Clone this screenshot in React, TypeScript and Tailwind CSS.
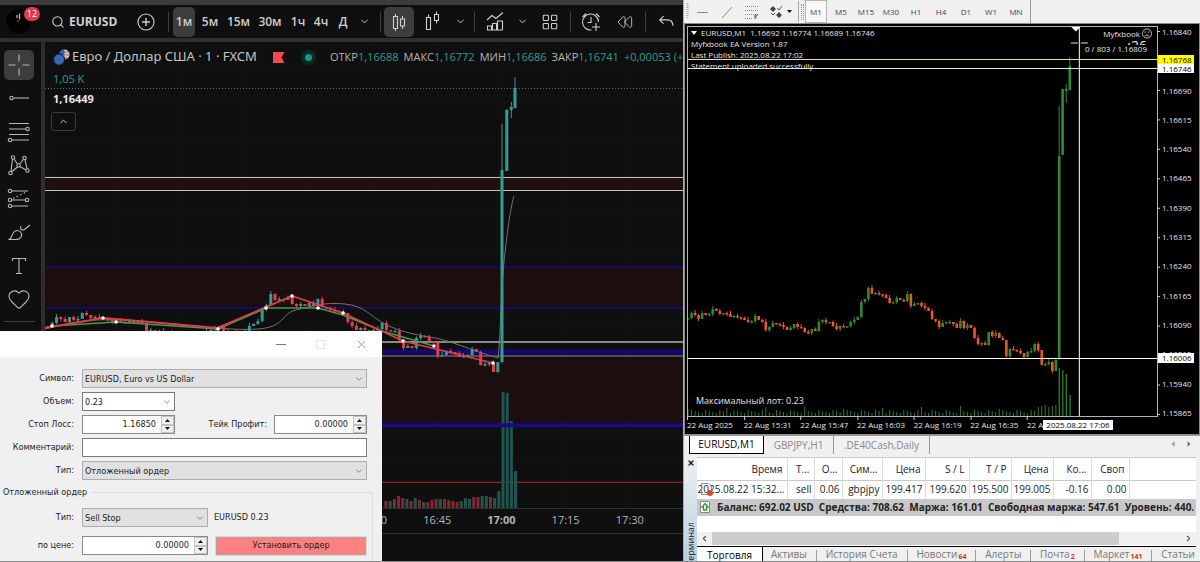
import { Fragment, useState, type ReactNode } from "react";
import { ChevronDown, ChevronUp, Heart, LayoutGrid, Rewind, Search, X } from "lucide-react";

type Candle = { x: number; open: number; close: number; high: number; low: number };

function buildCandles(closes: number[], x0: number, step: number, first: number): Candle[] {
  return closes.map((close, i) => {
    const open = i === 0 ? first : closes[i - 1];
    const high = Math.min(open, close) - (((i * 7) % 5) * 3) / 4;
    const low = Math.max(open, close) + (((i * 5) % 4) * 3) / 4;
    return { x: x0 + i * step, open, close, high, low };
  });
}

const tvCloses = [
  326, 323, 317, 319, 322, 317, 320, 319, 313, 315, 318, 317, 318, 319, 320, 322, 321, 322, 322, 321, 323, 322, 323,
  331, 330, 332, 331, 333, 332, 334, 333, 335, 334, 336, 335, 334, 333, 332, 330, 328, 326, 331, 333, 332, 333, 332,
  331, 326, 324, 321, 309, 305, 294, 300, 299, 300, 297, 304, 306, 304, 306, 303, 306, 299, 307, 308, 310, 311, 312,
  313, 322, 326, 330, 328, 330, 331, 330, 329, 323, 330, 331, 331, 340, 348, 346, 348, 338, 336, 337, 341, 343, 356,
  355, 351, 352, 353, 357, 356, 355, 349, 352, 365, 364, 363, 372, 362,
];
const tvCandles: Candle[] = [
  ...buildCandles(tvCloses, 48, 4.284, 328),
  { x: 502, open: 362, close: 170, high: 124, low: 363 },
  { x: 506.8, open: 171, close: 110, high: 109, low: 171 },
  { x: 511.3, open: 110, close: 107, high: 102, low: 118 },
  { x: 515, open: 108, close: 88, high: 77, low: 108 },
];
const tvVolume = [
  501, 501, 499, 496, 498, 499, 501, 498, 500, 502, 502, 500, 499, 499, 499, 500, 501, 502, 501, 498, 499, 497, 497, 496,
  496, 497, 498, 491, 392, 393, 421, 471,
];
const tvVolumeDown = [0, 2, 3, 4, 6, 8, 10, 11, 12, 14, 15, 16, 17, 21, 22, 25];

const mtCloses = [
  318, 313, 315, 319, 313, 315, 314, 309, 311, 314, 313, 314, 317, 316, 317, 318, 320, 322, 321, 316, 320, 322, 330, 327,
  323, 324, 325, 327, 330, 328, 324, 327, 328, 332, 333, 329, 331, 322, 320, 322, 322, 326, 329, 326, 327, 326, 322, 320,
  317, 302, 299, 288, 294, 293, 294, 295, 298, 303, 302, 298, 300, 301, 294, 306, 304, 303, 306, 308, 311, 319, 321, 327,
  323, 322, 322, 324, 328, 321, 328, 325, 328, 338, 344, 343, 345, 332, 336, 333, 338, 340, 356, 349, 350, 351, 353, 357,
  352, 351, 344, 350, 365, 364, 362, 371, 360,
];
const mtCandles: Candle[] = [
  ...buildCandles(mtCloses, 689, 3.53, 319),
  { x: 1059.4, open: 359, close: 156, high: 106, low: 360 },
  { x: 1062.8, open: 155, close: 89, high: 89, low: 155 },
  { x: 1066.4, open: 91, close: 89, high: 84, low: 103 },
  { x: 1070, open: 90, close: 66, high: 57, low: 90 },
];

const swings = [
  [52, 326], [103, 318], [116, 322], [218, 329], [266, 308], [292, 296],
  [318, 308], [343, 313], [403, 341], [434, 346], [493, 363],
];

function Candles({ data, up, down, width }: { data: Candle[]; up: string; down: string; width: number }) {
  return (
    <g>
      {data.map((c) => {
        const color = c.close <= c.open ? up : down;
        return (
          <Fragment key={c.x}>
            <line x1={c.x} x2={c.x} y1={c.high} y2={c.low} stroke={color} />
            <rect
              x={c.x - width / 2}
              y={Math.min(c.open, c.close)}
              width={width}
              height={Math.max(1.5, Math.abs(c.open - c.close))}
              fill={color}
            />
          </Fragment>
        );
      })}
    </g>
  );
}

function Icon({ children, size = 24 }: { children: ReactNode; size?: number }) {
  return (
    <svg
      className="shrink-0"
      width={size}
      height={size}
      viewBox="0 0 24 24"
      fill="none"
      stroke="currentColor"
      strokeWidth="1.1"
      aria-hidden
    >
      {children}
    </svg>
  );
}

const PlusCircle = () => (
  <Icon>
    <circle cx="12" cy="12" r="8" />
    <path d="M12 8v8M8 12h8" strokeWidth="1.4" />
  </Icon>
);
const CandleIcon = () => (
  <Icon>
    <path d="M6.500 6.500h4v12h-4zM8.500 4v2.500M8.500 18.500V21M13.500 9h4v7h-4zM15.500 6v3M15.500 16v3" />
  </Icon>
);
const BarStyleIcon = () => (
  <Icon>
    <path d="M5.500 7.500h4v12h-4zM7.500 4.500v3M13.500 4.500h4v6h-4zM15.500 1.500v3M15.500 10.500v3" />
  </Icon>
);
const IndicatorIcon = () => (
  <Icon>
    <path d="M4 10l5-4.500 4 3 7-6M4 20h15.500M4.500 20v-4h4v4M9.500 20v-6.500h4V20M14.500 20v-9h5v9" />
  </Icon>
);
const AlarmIcon = () => (
  <Icon>
    <path d="M19.500 12a8 8 0 1 0-7 8M12 7v5.500H8.500M3.500 7L7 3.500M17 3.500L20.500 7M17 13v8M13 17h8" />
  </Icon>
);
const UndoIcon = () => (
  <Icon size={20}>
    <path d="M9 5L4.500 9.500L9 14M5 9.500h9c4 0 6 3 6.500 7" strokeWidth="1.4" />
  </Icon>
);
const CrossIcon = () => (
  <Icon>
    <path d="M12 1.500v7M12 15.500v7M1.500 12h7M15.500 12h7" />
  </Icon>
);
const LineIcon = () => (
  <Icon>
    <circle cx="4.500" cy="12" r="1.700" />
    <path d="M6.500 12H22" />
  </Icon>
);
const FibIcon = () => (
  <Icon>
    <path d="M2 3.500h20M2 9h17M2 14.500h20M5 20h17" />
    <circle cx="20.500" cy="9" r="1.700" />
    <circle cx="3" cy="20" r="1.700" />
  </Icon>
);
const PatternIcon = () => (
  <Icon>
    <path d="M4 18.500L5.500 6M7 6l3.500 5M12.500 11L16.500 6.500M18 6.500l2 9.500M5 18.500l5.500-4.500M13 13.500l6 3.500" />
    <circle cx="6" cy="4.500" r="1.700" />
    <circle cx="17.500" cy="5" r="1.700" />
    <circle cx="11.500" cy="12.500" r="1.700" />
    <circle cx="3.500" cy="20" r="1.700" />
    <circle cx="20.500" cy="17.500" r="1.700" />
  </Icon>
);
const ForecastIcon = () => (
  <Icon>
    <path d="M5 4h16M5 13h13M5 19h16" />
    <path d="M6 11.500L19 5" strokeDasharray="1.500 2.500" />
    <circle cx="3" cy="4" r="1.700" />
    <circle cx="3" cy="13" r="1.700" />
    <circle cx="20" cy="13" r="1.700" />
    <circle cx="3" cy="19" r="1.700" />
  </Icon>
);
const BrushIcon = () => (
  <Icon>
    <path d="M1.500 19.500c3 0 3-4 5-7s6-2.500 7.500 0 .5 7-5.500 7zM14 6c-1.500 2.500 1 5 3.500 3.500L23 5" />
  </Icon>
);
const TextIcon = () => (
  <Icon>
    <path d="M5.500 7V4.500h13V7M12 4.500v15M9 19.500h6" />
  </Icon>
);

const toolbar: { label: string; width: string; node?: ReactNode; active?: boolean }[] = [
  { label: "1м", width: "w-[22px]", active: true },
  { label: "5м", width: "w-[30px]" },
  { label: "15м", width: "w-[27px]" },
  { label: "30м", width: "w-[36px]" },
  { label: "1ч", width: "w-[20px]" },
  { label: "4ч", width: "w-[26px]" },
  { label: "Д", width: "w-[18px]" },
  { label: "Интервалы", width: "w-[24px]", node: <ChevronDown size={11} /> },
  { label: "|", width: "w-[8px]" },
  { label: "Свечи", width: "w-[30px]", node: <CandleIcon />, active: true },
  { label: "Вид графика", width: "w-[38px]", node: <BarStyleIcon /> },
  { label: "Ещё виды", width: "w-[16px]", node: <ChevronDown size={11} /> },
  { label: "|", width: "w-[12px]" },
  { label: "Индикаторы", width: "w-[30px]", node: <IndicatorIcon /> },
  { label: "Шаблоны", width: "w-[24px]", node: <ChevronDown size={11} /> },
  { label: "Макет", width: "w-[32px]", node: <LayoutGrid size={18} strokeWidth={1.4} /> },
  { label: "|", width: "w-[8px]" },
  { label: "Оповещение", width: "w-[34px]", node: <AlarmIcon /> },
  { label: "Симулятор", width: "w-[34px]", node: <Rewind size={16} strokeWidth={1.3} /> },
  { label: "|", width: "w-[6px]" },
  { label: "Отменить", width: "w-[36px]", node: <UndoIcon /> },
];

const drawTools: [string, ReactNode][] = [
  ["Курсор", <CrossIcon />],
  ["Линия", <LineIcon />],
  ["Фибоначчи", <FibIcon />],
  ["Паттерны", <PatternIcon />],
  ["Прогноз", <ForecastIcon />],
  ["Кисть", <BrushIcon />],
  ["Текст", <TextIcon />],
  ["Избранное", <Heart size={24} strokeWidth={1.1} />],
];

function TvToolbar() {
  return (
    <div className="flex h-[33px] items-center overflow-hidden text-[#d0d0d0]">
      <div className="relative h-full w-[46px] shrink-0">
        <svg width="40" height="33" viewBox="0 0 40 33" aria-hidden>
          <circle cx="19" cy="16" r="12.500" fill="#020202" />
          <path d="M17 10v3M19.500 8.500v6" stroke="#b8b0ac" strokeWidth="1.300" />
          <circle cx="18" cy="16" r="1.500" fill="#3a2c28" />
        </svg>
        <span className="absolute top-[2px] left-[24px] grid h-[14px] w-[16px] place-items-center rounded-full bg-[#e03a50] text-[9px] text-white">
          12
        </span>
      </div>
      <button className="flex w-[82px] shrink-0 items-center gap-1 pl-[5px] text-[12px] font-bold">
        <Search size={14} strokeWidth={1.8} />
        EURUSD
      </button>
      <button className="grid w-[36px] shrink-0 place-items-center" aria-label="Добавить">
        <PlusCircle />
      </button>
      <span className="mx-1 h-5 w-px shrink-0 bg-[#3d3d3d]" />
      {toolbar.map((t, i) =>
        t.label === "|" ? (
          <span key={i} className={`${t.width} flex shrink-0 justify-center`}>
            <span className="h-5 w-px bg-[#3d3d3d]" />
          </span>
        ) : (
          <button
            key={i}
            aria-label={t.label}
            className={`${t.width} ${t.active ? "rounded-[5px] bg-[#3d3d3d]" : ""} flex h-[30px] shrink-0 items-center justify-center text-[12px] font-semibold`}
          >
            {t.node ?? t.label}
          </button>
        ),
      )}
    </div>
  );
}

function TvPlot() {
  const grid = [51, 116, 180, 244, 309, 373, 437, 502, 566, 630];
  const rows = [64, 101, 139, 176, 213, 251, 288, 325, 363, 400, 437, 460];
  return (
    <svg className="absolute inset-0 h-full w-full" viewBox="45 42 638 519" preserveAspectRatio="none" aria-hidden>
      <rect x="45" y="178" width="638" height="13" fill="#1e1011" />
      <rect x="45" y="267" width="638" height="41" fill="#1c0d0f" />
      <rect x="45" y="356" width="638" height="69" fill="#1c0d0f" />
      {grid.map((x) => (
        <line key={x} x1={x + 0.5} x2={x + 0.5} y1="42" y2="508" stroke="#fff" strokeOpacity=".02" />
      ))}
      {rows.map((y) => (
        <line key={y} x1="45" x2="683" y1={y + 0.5} y2={y + 0.5} stroke="#fff" strokeOpacity=".02" />
      ))}
      <path d="M45 88.500h638" stroke="#3f7a70" strokeDasharray="1 2" />
      <path d="M45 177.500h638M45 190.500h638" stroke="#c9c1bd" strokeWidth="1.200" />
      <path d="M45 267.200h638M45 307.700h638" stroke="#17088a" strokeWidth="1.600" />
      <path d="M45 342h638" stroke="#b4b0ac" strokeWidth="1.400" />
      <rect x="45" y="349.500" width="638" height="5" fill="#170870" />
      <path d="M45 356h638" stroke="#5b6379" strokeWidth="1.500" />
      <path d="M45 482.300h638" stroke="#8f2027" strokeWidth="1.300" />
      <path d="M45 508.500h638M45 533.500h638" stroke="#303030" />
      {tvVolume.map((y, i) => (
        <rect
          key={i}
          x={384.5 + i * 4.18}
          y={y}
          width="3"
          height={508 - y}
          fill={tvVolumeDown.includes(i) ? "#7d2b31" : "#1f5750"}
        />
      ))}
      <rect x="45" y="423.300" width="638" height="4" fill="#190a85" />
      <path
        d="M45 329C90 317 110 319 150 322S230 331 258 329S280 314 296 310S325 302 345 304S370 316 383 323S410 334 430 337S470 350 498 358C501 330 501 290 504 262S510 210 514 196"
        fill="none"
        stroke="#77706e"
      />
      <Candles data={tvCandles} up="#369b90" down="#e0404d" width={3} />
      <path
        d="M52 326L116 322L218 329L266 308L318 308L343 315L382 331L434 346"
        fill="none"
        stroke="#3f9c50"
        strokeWidth="1.700"
      />
      <path
        d="M45 328L103 318L150 322L217 328L292 296L343 313L403 341L493 363"
        fill="none"
        stroke="#e63a48"
        strokeWidth="1.800"
      />
      {swings.map(([x, y]) => (
        <circle key={x} cx={x} cy={y} r="1.800" fill="#fff" />
      ))}
    </svg>
  );
}

const quote = [
  ["ОТКР", "1,16688"],
  ["МАКС", "1,16772"],
  ["МИН", "1,16686"],
  ["ЗАКР", "1,16741"],
];

function TvChart() {
  return (
    <div className="relative flex min-w-0 flex-1 flex-col overflow-hidden bg-[#0f0f0f]">
      <TvPlot />
      <div className="relative flex-1">
        <div className="flex h-[30px] items-center pl-2 whitespace-nowrap">
          <svg className="shrink-0" width="17" height="17" viewBox="0 0 17 17" aria-hidden>
            <circle cx="11.500" cy="5.500" r="5" fill="#d8d4dc" />
            <path d="M11 3h5.500M11 6h5.500M10 9h5" stroke="#d04858" />
            <path d="M6.500 6V3A5 5 0 0 1 11.500.5V6z" fill="#3c62ae" />
            <circle cx="6" cy="10.500" r="5.800" fill="#2a62b0" stroke="#0f0f0f" />
            <circle cx="6" cy="10.500" r="2.500" fill="none" stroke="#6a90b8" strokeDasharray="1 1" />
          </svg>
          <h1 className="ml-[2px] w-[201px] shrink-0 font-['Noto_Sans','Open_Sans',sans-serif] text-[13px] text-[#c4c4c4]">
            Евро / Доллар США · 1 · FXCM
          </h1>
          <svg className="shrink-0" width="12" height="11" viewBox="0 0 12 11" aria-hidden>
            <path d="M0 0h11.500L8.500 5.500l3 5.500H0z" fill="#f5484f" />
          </svg>
          <span className="ml-4 grid h-[15px] w-[15px] shrink-0 place-items-center rounded-full bg-[#0c2a25]">
            <span className="h-[7px] w-[7px] rounded-full bg-[#0d9c81]" />
          </span>
          <div className="ml-[14px] flex gap-[5px] text-[11px] text-[#b4b4b4]">
            {quote.map(([name, value]) => (
              <span key={name}>
                {name}
                <span className="text-[#369b8c]">{value}</span>
              </span>
            ))}
            <span className="text-[#369b8c]">+0,00053 (+</span>
          </div>
        </div>
        <p className="pl-2 text-[11px] leading-[13px] text-[#369b8c]">1,05 K</p>
        <p className="mt-[7px] pl-2 text-[11px] leading-[13px] font-bold text-[#e8e8e8]">1,16449</p>
        <button
          aria-label="Свернуть"
          className="mt-[7px] ml-1.5 grid h-[19px] w-[25px] place-items-center rounded-[3px] border border-[#3a3a3a] text-[#d0d0d0]"
        >
          <ChevronUp size={11} />
        </button>
      </div>
      <div className="relative mb-7 flex h-[25px] items-center pr-[21px] pl-[39px] text-[11px] text-[#b4b4b4]">
        {["15:30", "15:45", "16:00", "16:15", "16:30", "16:45", "17:00", "17:15", "17:30"].map((t) => (
          <span key={t} className={`flex-1 text-center ${t === "17:00" ? "font-bold" : ""}`}>
            {t}
          </span>
        ))}
      </div>
    </div>
  );
}

function Select({ id, options, editable }: { id: string; options: string[]; editable?: boolean }) {
  return (
    <div className="relative min-w-0 flex-1">
      <select
        id={id}
        className={`${editable ? "border-[#7a7a7a] bg-white" : "border-[#adadad] bg-[#e1e1e1]"} block h-[19px] w-full appearance-none border pl-[2px] leading-[16px]`}
      >
        {options.map((o) => (
          <option key={o}>{o}</option>
        ))}
      </select>
      <ChevronDown size={10} strokeWidth={1.8} className="pointer-events-none absolute top-[5px] right-[3px] text-[#666]" />
    </div>
  );
}

function Spin({ id, initial }: { id: string; initial: string }) {
  const [value, setValue] = useState(initial);
  const bump = (d: number) => setValue((v) => (Number(v) + d).toFixed(5));
  return (
    <div className="flex h-[19px] min-w-0 flex-1 border border-[#8a8a8a] bg-white">
      <input
        id={id}
        value={value}
        onChange={(e) => setValue(e.target.value)}
        className="w-full min-w-0 flex-1 bg-transparent pr-[5px] text-right outline-none"
      />
      <div className="flex w-[13px] flex-col bg-[#f0f0f0]">
        {[1, -1].map((d) => (
          <button
            key={d}
            type="button"
            aria-label={d > 0 ? "Больше" : "Меньше"}
            onClick={() => bump(d * 0.00001)}
            className="grid flex-1 place-items-center border border-[#c4c4c4]"
          >
            <svg width="5" height="3" viewBox="0 0 5 3" aria-hidden>
              <path d={d > 0 ? "M0 3L2.500 0L5 3z" : "M0 0L2.500 3L5 0z"} fill="#111" />
            </svg>
          </button>
        ))}
      </div>
    </div>
  );
}

function Field({ id, label, children }: { id: string; label: string; children: ReactNode }) {
  return (
    <div className="flex items-center">
      <label htmlFor={id} className="w-[75px] shrink-0 pr-px text-right">
        {label}
      </label>
      <div className="ml-[7px] flex min-w-0 flex-1 items-center">{children}</div>
    </div>
  );
}

function OrderDialog() {
  return (
    <form
      onSubmit={(e) => e.preventDefault()}
      className="absolute bottom-0 left-0 w-[382px] bg-[#f0f0f0] font-['DejaVu_Sans_Condensed','DejaVu_Sans',sans-serif] text-[9px] text-[#1c1c1c]"
    >
      <div className="flex h-[26px] items-center justify-end gap-[26px] bg-white pr-[14px] text-[#777]">
        <button type="button" aria-label="Свернуть" className="h-px w-[10px] bg-[#777]" />
        <button type="button" aria-label="Развернуть" className="mx-1 h-[9px] w-[9px] border border-[#e6e6e6]" />
        <button type="button" aria-label="Закрыть">
          <X size={13} strokeWidth={1.3} />
        </button>
      </div>
      <div className="flex flex-col gap-1 pt-3 pr-[15px]">
        <Field id="symbol" label="Символ:">
          <Select id="symbol" options={["EURUSD, Euro vs US Dollar"]} />
        </Field>
        <Field id="volume" label="Объем:">
          <div className="flex w-[93px]">
            <Select id="volume" options={["0.23"]} editable />
          </div>
        </Field>
        <Field id="sl" label="Стоп Лосс:">
          <div className="flex w-[93px]">
            <Spin id="sl" initial="1.16850" />
          </div>
          <label htmlFor="tp" className="flex-1 pr-[7px] text-right">
            Тейк Профит:
          </label>
          <div className="flex w-[93px]">
            <Spin id="tp" initial="0.00000" />
          </div>
        </Field>
        <Field id="comment" label="Комментарий:">
          <input id="comment" className="h-[19px] w-full border border-[#7a7a7a] bg-white px-1 outline-none" />
        </Field>
        <Field id="type" label="Тип:">
          <Select id="type" options={["Отложенный ордер"]} />
        </Field>
      </div>
      <fieldset className="mt-1 mr-[9px] border-t border-r border-[#dcdcdc] pb-1.5">
        <legend className="pr-1 pl-[3px] leading-[16px]">Отложенный ордер</legend>
        <div className="flex flex-col gap-[9px] pt-2 pr-[6px]">
          <Field id="pending" label="Тип:">
            <div className="flex w-[126px]">
              <Select id="pending" options={["Sell Stop"]} />
            </div>
            <span className="ml-[6px]">EURUSD 0.23</span>
          </Field>
          <Field id="price" label="по цене:">
            <div className="flex w-[126px]">
              <Spin id="price" initial="0.00000" />
            </div>
            <button
              type="submit"
              className="ml-2 h-[18px] flex-1 border border-[#b9a0a0] bg-[#ff8080] outline outline-[#d8d8d8]"
            >
              Установить ордер
            </button>
          </Field>
        </div>
      </fieldset>
    </form>
  );
}

const scale = [
  "1.16840", "", "1.16690", "1.16615", "1.16540", "1.16465", "1.16390",
  "1.16315", "1.16240", "1.16165", "1.16090", "1.16015", "1.15940", "1.15865",
];

function MtPlot() {
  return (
    <svg
      className="absolute inset-0 h-full w-full overflow-visible"
      viewBox="688 26 470 390"
      preserveAspectRatio="none"
      aria-hidden
    >
      {mtCandles.slice(0, 105).map((c, i) => {
        const h = i > 98 ? 9 + (i % 3) : 3 + ((i * 7) % 4) + (i % 11 === 0 ? 4 : 0);
        return <line key={i} x1={c.x} x2={c.x} y1={416 - h} y2="416" stroke="#2f7a35" />;
      })}
      <path d="M1059.500 368V416M1063 370V416M1066.500 374V416M1070.300 395V416" stroke="#2f8a36" strokeWidth="1.200" />
      <Candles data={mtCandles} up="#2f8a36" down="#ee5426" width={2.6} />
      <path d="M688 59.500H1158" stroke="#e8e0a0" />
      <path d="M688 68.500H1158" stroke="#e8e8e8" />
      <path d="M688 358.500H1158M1079.500 26V416" stroke="#fff" />
      <path d="M1071 43h7M1081 43h7" stroke="#ddd" />
      <path d="M1071.500 27h9L1076 31.500z" fill="#fff" />
      <path d="M688.500 416V26.500H1157.500V416M688 416.500H1158" fill="none" stroke="#b4b4b4" />
      {[688, 745, 801, 858, 914, 971, 1027].map((x) => (
        <line key={x} x1={x + 0.5} x2={x + 0.5} y1="416" y2="420" stroke="#ccc" />
      ))}
      {scale.map((_, i) => (
        <line key={i} x1="1157" x2="1160" y1={31.5 + i * 29.46} y2={31.5 + i * 29.46} stroke="#ccc" />
      ))}
    </svg>
  );
}

function MtChart() {
  return (
    <section className="flex flex-1 border border-[#8c8c8c] bg-black pt-[2px] pr-px pl-[2px] text-[8px] text-[#e6e6e6]">
      <div className="flex min-w-0 flex-1 flex-col">
        <div className="relative flex-1">
          <MtPlot />
          <div className="relative flex justify-between pt-px pr-[5px] pl-[4px] leading-[11px] whitespace-nowrap">
            <div>
              <p className="flex items-center gap-1">
                <svg width="6" height="4" viewBox="0 0 6 4" aria-hidden>
                  <path d="M0 0h6L3 4z" fill="#fff" />
                </svg>
                EURUSD,M1&nbsp; 1.16692 1.16774 1.16689 1.16746
              </p>
              <p>Myfxbook EA Version 1.87</p>
              <p>Last Publish: 2025.08.22 17:02</p>
              <p>Statement uploaded successfully</p>
            </div>
            <div className="flex flex-col items-end pt-px">
              <p className="flex items-center gap-px">
                Myfxbook
                <svg width="12" height="11" viewBox="0 0 12 12" fill="none" stroke="#ccc" aria-hidden>
                  <circle cx="6" cy="6" r="5" />
                  <path d="M3.500 9q2.500-3 5 0M4 3.500v2M8 3.500v2" />
                </svg>
              </p>
              <p className="mr-1.5 h-[6px] overflow-hidden text-[14px] leading-[14px]">:26</p>
              <p className="mr-1.5 -mt-[2px]">0 / 803 / 1.16809</p>
            </div>
          </div>
          <p className="absolute bottom-[9px] left-[9px] text-[9px] leading-[12px]">Максимальный лот: 0.23</p>
        </div>
        <div className="relative flex h-[18px] overflow-hidden pt-[4px] leading-[10px] whitespace-nowrap">
          {["2025", "15:31", "15:47", "16:03", "16:19", "16:35"].map((t) => (
            <span key={t} className="w-[12.030%] shrink-0">
              22 Aug {t}
            </span>
          ))}
          <span>22 A</span>
          <span className="absolute top-[4px] left-[356px] w-[70px] bg-white text-center text-black">2025.08.22 17:06</span>
        </div>
      </div>
      <div className="relative flex w-[40px] flex-col">
        <div className="mb-[15px] flex flex-1 flex-col justify-between pl-[4px] leading-[12px]">
          {scale.map((s, i) => (
            <span key={i} className="h-[12px]">
              {s}
            </span>
          ))}
        </div>
        <span className="absolute top-[29px] left-0 w-[36px] bg-[#ffff00] pl-[4px] leading-[9px] text-black">1.16768</span>
        <span className="absolute top-[38px] left-0 w-[36px] bg-white pl-[4px] leading-[9px] text-black">1.16746</span>
        <span className="absolute bottom-[71px] left-0 w-[36px] bg-white pl-[4px] leading-[10px] text-black">1.16006</span>
      </div>
    </section>
  );
}

const columns: [string, string, string][] = [
  ["Время", "w-[90px]", "2025.08.22 15:32..."],
  ["Т...", "w-[27px]", "sell"],
  ["О...", "w-[28px]", "0.06"],
  ["Сим...", "w-[40px]", "gbpjpy"],
  ["Цена", "w-[43px]", "199.417"],
  ["S / L", "w-[44px]", "199.620"],
  ["T / P", "w-[42px]", "195.500"],
  ["Цена", "w-[42px]", "199.005"],
  ["Ко...", "w-[38px]", "-0.16"],
  ["Своп", "w-[38px]", "0.00"],
];

const terminalTabs: [string, string?][] = [
  ["Активы"], ["История Счета"], ["Новости", "64"], ["Алерты"], ["Почта", "2"], ["Маркет", "141"], ["Статьи"],
];

function Terminal() {
  return (
    <section className="flex h-[104px] text-[10px] text-[#222]">
      <div className="flex w-[13px] shrink-0 flex-col items-center justify-between overflow-hidden bg-gradient-to-b from-[#f0f0f0] to-[#b8cfe4]">
        <button aria-label="Закрыть" className="mt-[2px]">
          <X size={8} strokeWidth={4} />
        </button>
        <span className="rotate-180 text-[9px] leading-[12px] [writing-mode:vertical-rl]">ерминал</span>
      </div>
      <div className="mr-[4px] flex min-w-0 flex-1 flex-col bg-white">
        <table className="w-full table-fixed border-collapse whitespace-nowrap">
          <thead>
            <tr className="h-[23px] border-y border-[#c8c8c8]">
              {columns.map(([name, width], i) => (
                <th key={i} className={`${width} border-r border-[#dcdcdc] p-0 pr-[4px] text-right font-normal`}>
                  {name}
                </th>
              ))}
              <th />
            </tr>
          </thead>
          <tbody>
            <tr className="h-[18px]">
              {columns.map(([, , value], i) => (
                <td key={i} className="border-r border-[#dcdcdc] p-0 pr-[2px] text-right">
                  {i === 0 ? (
                    <span className="relative">
                      {value}
                      <svg className="absolute top-0 left-[3px]" width="13" height="15" viewBox="0 0 13 15" aria-hidden>
                        <path d="M.5 1.500h7l3 3v8H.5z" fill="none" stroke="#888" />
                        <circle cx="9" cy="11" r="3" fill="#d84a20" />
                      </svg>
                    </span>
                  ) : (
                    value
                  )}
                </td>
              ))}
              <td />
            </tr>
          </tbody>
        </table>
        <div className="flex h-[17px] items-center gap-[7px] overflow-hidden bg-[#c8c8c8] pl-[3px] font-bold whitespace-pre">
          <svg className="shrink-0" width="10" height="12" viewBox="0 0 10 12" aria-hidden>
            <path d="M.5.5h9v11h-9z" fill="#fff" stroke="#888" />
            <path d="M5 2.500L8 6H6.500v3h-3V6H2z" fill="none" stroke="#2f9a35" strokeWidth="1.300" />
          </svg>
          Баланс: 692.02 USD{"  "}Средства: 708.62{"  "}Маржа: 161.01{"  "}Свободная маржа: 547.61{"  "}Уровень: 440.
        </div>
        <div className="mt-auto flex h-[13px] items-center bg-[#f0f0f0] text-[#555]">
          <button aria-label="Влево" className="grid w-[15px] place-items-center">
            <ChevronDown size={9} strokeWidth={3} className="rotate-90" />
          </button>
          <span className="h-full w-[407px] bg-[#cdcdcd]" />
          <button aria-label="Вправо" className="mr-[3px] ml-auto">
            <ChevronDown size={9} strokeWidth={3} className="-rotate-90" />
          </button>
        </div>
        <nav className="mt-px flex h-[15px] border-t border-black bg-[#f0f0f0] leading-[16px] whitespace-nowrap text-[#777]">
          <button className="w-[66px] shrink-0 border-r border-black bg-white text-black">Торговля</button>
          <div className="flex flex-1 justify-between overflow-hidden pr-px pl-[8px]">
            {terminalTabs.map(([name, count], i) => (
              <Fragment key={name}>
                {i > 0 && <span className="mt-[3px] h-[11px] w-px bg-[#999]" />}
                <button className="flex items-center">
                  {name}
                  {count && <span className="mt-[5px] ml-px text-[7px] font-bold text-[#d83030]">{count}</span>}
                </button>
              </Fragment>
            ))}
          </div>
        </nav>
      </div>
    </section>
  );
}

function MtToolbar() {
  return (
    <div className="flex h-[23px] items-center text-[8px] text-[#444]">
      <svg width="117" height="23" viewBox="0 0 117 23" fill="none" stroke="#888" aria-hidden>
        <path d="M3.500 3v16" strokeWidth="2" strokeDasharray="1 1" stroke="#aaa" />
        <path d="M13 12.500h11M38 18L48 7" />
        <path d="M61 6.500h13M61 10.500h13M61 14.500h13M61 18.500h8" strokeDasharray="1 1" />
        <path d="M71 19v-4h3M71 17h2" stroke="#555" />
        <path d="M86 9l3-3 3 3-3 3zM92 15l3-3 3 3-3 3z" fill="#444" stroke="none" />
        <path d="M93 8l2 2 3-4M87 13l2 2 2-2" stroke="#555" />
        <path d="M103 10h5l-2.500 3z" fill="#111" stroke="none" />
        <path d="M114.500 1v21" stroke="#aaa" />
      </svg>
      <span className="mr-px h-[16px] w-[3px] border-x border-dotted border-[#999]" />
      <div className="flex h-full border-r border-[#999] pr-[3px]">
        {["M1", "M5", "M15", "M30", "H1", "H4", "D1", "W1", "MN"].map((t, i) => (
          <button
            key={t}
            className={`${i === 0 ? "border border-[#b4b4b4] bg-[#f8f8f8]" : ""} w-[22px] text-center ${i > 0 ? "ml-[3px]" : ""}`}
          >
            {t}
          </button>
        ))}
      </div>
    </div>
  );
}

export default function App() {
  return (
    <main className="flex min-h-screen overflow-hidden border-b border-[#8c8c8c] bg-[#f0f0f0] font-['Open_Sans','Noto_Sans',sans-serif]">
      <section className="relative flex w-[57%] flex-col border-r border-[#aaa] bg-[#0f0f0f]">
        <div className="h-[5px] bg-[#3c3c3c]" />
        <TvToolbar />
        <div className="h-1 bg-[#2e2e2e]" />
        <div className="flex flex-1">
          <aside className="w-[45px] shrink-0 border-r-4 border-[#2e2e2e] pt-2 pl-1 text-[#b8b8b8]">
            <div className="flex h-[264px] flex-col justify-between">
              {drawTools.map(([name, icon], i) => (
                <button
                  key={name}
                  aria-label={name}
                  className={`${i === 0 ? "bg-[#3d3d3d]" : ""} grid h-[30px] w-[30px] place-items-center rounded-[5px]`}
                >
                  {icon}
                </button>
              ))}
            </div>
            <div className="mt-[7px] h-px w-[31px] bg-[#3d3d3d]" />
          </aside>
          <TvChart />
        </div>
        <OrderDialog />
      </section>
      <section className="flex min-w-0 flex-1 flex-col">
        <MtToolbar />
        <MtChart />
        <nav className="flex h-[22px] items-start border-t border-[#999] text-[10px] text-[#8a8a8a]">
          <button className="ml-[5px] h-[18px] w-[75px] border border-t-0 border-black bg-white text-black">EURUSD,M1</button>
          <button className="h-[18px] w-[70px] border-r border-[#999]">GBPJPY,H1</button>
          <button className="h-[18px] w-[96px] border-r border-[#999]">.DE40Cash,Daily</button>
          <div className="mt-[5px] mr-2 ml-auto flex gap-[10px]">
            <svg width="6" height="6" viewBox="0 0 6 6" aria-hidden>
              <path d="M4.500 0v6L1.500 3z" fill="#999" />
            </svg>
            <svg width="6" height="6" viewBox="0 0 6 6" aria-hidden>
              <path d="M1.500 0v6l3-3z" fill="#777" />
            </svg>
          </div>
        </nav>
        <Terminal />
      </section>
    </main>
  );
}
